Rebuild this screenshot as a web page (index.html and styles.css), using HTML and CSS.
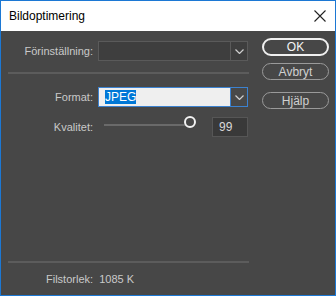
FILE: index.html
```html
<!DOCTYPE html>
<html lang="sv">
<head>
    <meta charset="UTF-8">
    <title>Bildoptimering</title>
    <link rel="stylesheet" href="styles.css">
</head>
<body>
    <div class="window">
        <div class="titlebar">
            <span class="title">Bildoptimering</span>
            <svg class="close" width="12" height="12" viewBox="0 0 12 12">
                <path d="M0.5 0.5 L11.5 11.5 M11.5 0.5 L0.5 11.5" stroke="#222" stroke-width="1.1" fill="none"/>
            </svg>
        </div>
        <div class="content">
            <div class="panel">
                <div class="row preset">
                    <label class="label">Förinställning:</label>
                    <div class="select">
                        <span class="value"></span>
                        <span class="arrow"><svg width="9" height="5" viewBox="0 0 9 5"><path d="M0.5 0.5 L4.5 4.5 L8.5 0.5" stroke="#cfcfcf" stroke-width="1.2" fill="none"/></svg></span>
                    </div>
                </div>
                <div class="separator"></div>
                <div class="row format">
                    <label class="label">Format:</label>
                    <div class="select focused">
                        <span class="value"><span class="selected">JPEG</span></span>
                        <span class="arrow"><svg width="9" height="5" viewBox="0 0 9 5"><path d="M0.5 0.5 L4.5 4.5 L8.5 0.5" stroke="#cfcfcf" stroke-width="1.2" fill="none"/></svg></span>
                    </div>
                </div>
                <div class="row quality">
                    <label class="label">Kvalitet:</label>
                    <div class="slider">
                        <div class="track"></div>
                        <div class="thumb"></div>
                    </div>
                    <div class="number">99</div>
                </div>
                <div class="spacer"></div>
                <div class="separator"></div>
                <div class="filesize">Filstorlek:&nbsp; 1085 K</div>
            </div>
            <div class="buttons">
                <button class="btn primary">OK</button>
                <button class="btn">Avbryt</button>
                <button class="btn help">Hjälp</button>
            </div>
        </div>
    </div>
</body>
</html>
```

FILE: styles.css
```css
* {
    box-sizing: border-box;
}
body {
    margin: 0;
    font-family: "Liberation Sans", Arial, sans-serif;
    font-size: 11px;
}
.window {
    width: 336px;
    height: 296px;
    border: 1px solid #1c78d4;
    display: flex;
    flex-direction: column;
    background-color: #474747;
}
.titlebar {
    height: 30px;
    background-color: white;
    display: flex;
    align-items: center;
    justify-content: space-between;
    padding: 0 8px 0 8px;
    color: #000;
}
.title {
    font-size: 12px;
    margin-top: -1px;
}
.close {
    margin-right: 1px;
}
.content {
    flex: 1;
    display: flex;
    color: #c9c9c9;
}
.panel {
    width: 248px;
    margin-left: 7px;
    display: flex;
    flex-direction: column;
}
.row {
    display: grid;
    grid-template-columns: 85px 150px;
    column-gap: 5px;
    align-items: center;
}
.label {
    text-align: right;
}
.preset {
    margin-top: 10px;
}
.select {
    height: 20px;
    display: flex;
    border: 1px solid #5a5a5a;
    background-color: #3e3e3e;
}
.select .value {
    flex: 1;
    display: flex;
    align-items: center;
    padding-left: 6px;
}
.select .arrow {
    width: 17px;
    border-left: 1px solid #5a5a5a;
    display: flex;
    align-items: center;
    justify-content: center;
}
.select.focused {
    border-color: #3c82d0;
    background-color: #efefef;
}
.select.focused .value {
    color: #000;
}
.select.focused .arrow {
    background-color: #484848;
    border-left-color: #3c82d0;
}
.selected {
    background-color: #0078d7;
    color: white;
    line-height: 14px;
    font-size: 12px;
}
.separator {
    height: 2px;
    width: 241px;
    background-color: #5c5c5c;
    margin-top: 11px;
}
.format {
    margin-top: 13px;
}
.quality {
    margin-top: 10px;
    grid-template-columns: 85px 104px 41px;
}
.slider {
    position: relative;
    height: 20px;
    display: flex;
    align-items: center;
    padding-left: 6px;
}
.track {
    width: 86px;
    height: 2px;
    background-color: #6a6a6a;
    margin-top: -5px;
}
.thumb {
    position: absolute;
    left: 86px;
    top: -1px;
    width: 12px;
    height: 12px;
    border: 2px solid #f2f2f2;
    border-radius: 50%;
    background-color: #474747;
}
.number {
    height: 20px;
    margin-left: 5px;
    border: 1px solid #565656;
    background-color: #393939;
    padding-left: 6px;
    line-height: 18px;
    color: #d8d8d8;
    font-size: 12px;
}
.spacer {
    flex: 1;
}
.separator + .filesize {
    margin-top: 7px;
}
.filesize {
    padding-left: 38px;
    height: 25px;
    line-height: 18px;
}
.buttons {
    display: flex;
    flex-direction: column;
    padding-top: 7px;
    margin-left: 6px;
}
.btn {
    width: 67px;
    height: 17px;
    border: 1px solid #9a9a9a;
    border-radius: 9px;
    background-color: transparent;
    color: #d0d0d0;
    font-family: inherit;
    font-size: 12px;
    padding: 0;
    line-height: 14px;
    margin-bottom: 7px;
}
.btn.primary {
    height: 18px;
    border: 2px solid #f0f0f0;
    color: #f4f4f4;
}
.btn.help {
    margin-top: 5px;
}
```
